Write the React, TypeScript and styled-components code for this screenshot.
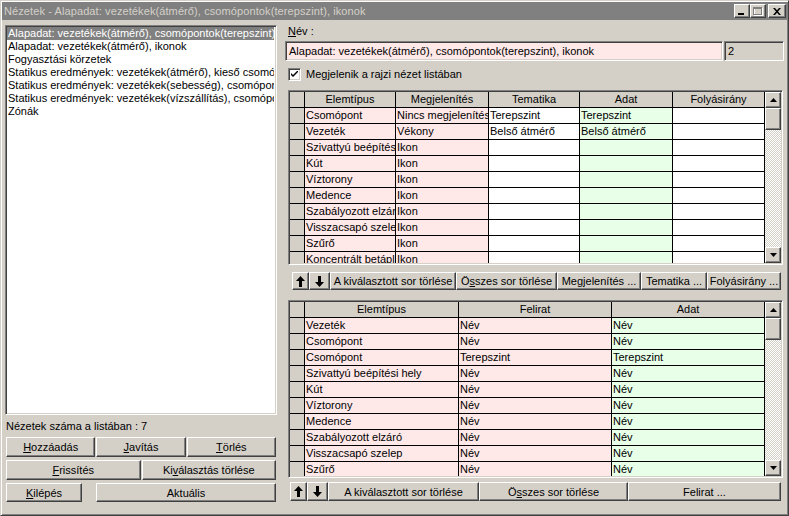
import React from 'react';
import styled, { createGlobalStyle, css } from 'styled-components';

const GlobalStyle = createGlobalStyle`
  html, body {
    margin: 0;
    padding: 0;
    background: #d4d0c8;
  }
  body {
    font-family: "Liberation Sans", Arial, sans-serif;
    font-size: 11px;
    color: #000;
  }
  * {
    box-sizing: border-box;
  }
`;

const raised = css`
  border: 1px solid;
  border-color: #ffffff #404040 #404040 #ffffff;
  box-shadow: inset -1px -1px 0 #808080, inset 1px 1px 0 #d4d0c8;
  background: #d4d0c8;
`;

const sunken = css`
  border: 1px solid;
  border-color: #808080 #ffffff #ffffff #808080;
  box-shadow: inset 1px 1px 0 #404040, inset -1px -1px 0 #d4d0c8;
`;

const listItems = [
  'Alapadat: vezetékek(átmérő), csomópontok(terepszint), ikonok',
  'Alapadat: vezetékek(átmérő), ikonok',
  'Fogyasztási körzetek',
  'Statikus eredmények: vezetékek(átmérő), kieső csomópontok',
  'Statikus eredmények: vezetékek(sebesség), csomópontok(nyomás)',
  'Statikus eredmények: vezetékek(vízszállítás), csomópontok(nyomás)',
  'Zónák',
];

const PINK = '#ffe8e8';
const GREEN = '#e8ffe8';
const WHITE = '#ffffff';

const topCols = [
  { title: 'Elemtípus', w: 91, bg: PINK },
  { title: 'Megjelenítés', w: 93, bg: PINK },
  { title: 'Tematika', w: 91, bg: WHITE },
  { title: 'Adat', w: 93, bg: GREEN },
  { title: 'Folyásirány', w: 92, bg: WHITE },
];

const topRows = [
  ['Csomópont', 'Nincs megjelenítés', 'Terepszint', 'Terepszint', ''],
  ['Vezeték', 'Vékony', 'Belső átmérő', 'Belső átmérő', ''],
  ['Szivattyú beépítési hely', 'Ikon', '', '', ''],
  ['Kút', 'Ikon', '', '', ''],
  ['Víztorony', 'Ikon', '', '', ''],
  ['Medence', 'Ikon', '', '', ''],
  ['Szabályozott elzáró', 'Ikon', '', '', ''],
  ['Visszacsapó szelep', 'Ikon', '', '', ''],
  ['Szűrő', 'Ikon', '', '', ''],
  ['Koncentrált betáplálás', 'Ikon', '', '', ''],
  ['Tározó', 'Ikon', '', '', ''],
];

const bottomCols = [
  { title: 'Elemtípus', w: 154, bg: PINK },
  { title: 'Felirat', w: 153, bg: PINK },
  { title: 'Adat', w: 153, bg: GREEN },
];

const bottomRows = [
  ['Vezeték', 'Név', 'Név'],
  ['Csomópont', 'Név', 'Név'],
  ['Csomópont', 'Terepszint', 'Terepszint'],
  ['Szivattyú beépítési hely', 'Név', 'Név'],
  ['Kút', 'Név', 'Név'],
  ['Víztorony', 'Név', 'Név'],
  ['Medence', 'Név', 'Név'],
  ['Szabályozott elzáró', 'Név', 'Név'],
  ['Visszacsapó szelep', 'Név', 'Név'],
  ['Szűrő', 'Név', 'Név'],
  ['Koncentrált betáplálás', 'Név', 'Név'],
];

type Col = { title: string; w: number; bg: string };

const ArrowUp = () => (
  <svg width="9" height="11" viewBox="0 0 9 11">
    <path d="M4.5 0 L9 5 L6 5 L6 11 L3 11 L3 5 L0 5 Z" fill="#000" />
  </svg>
);

const ArrowDown = () => (
  <svg width="9" height="11" viewBox="0 0 9 11">
    <path d="M4.5 11 L9 6 L6 6 L6 0 L3 0 L3 6 L0 6 Z" fill="#000" />
  </svg>
);

const Tri = ({ down }: { down?: boolean }) => (
  <svg width="7" height="4" viewBox="0 0 7 4">
    <path d={down ? 'M0 0 L7 0 L3.5 4 Z' : 'M3.5 0 L7 4 L0 4 Z'} fill="#000" />
  </svg>
);

const DataGrid = ({ cols, rows, height }: { cols: Col[]; rows: string[][]; height: number }) => (
  <GridFrame $h={height}>
    <GridBody $cols={'15px ' + cols.map((c) => c.w + 'px').join(' ')}>
      <Cell $bg="#d4d0c8" />
      {cols.map((c) => (
        <Cell key={c.title} $bg="#d4d0c8" $head>
          {c.title}
        </Cell>
      ))}
      {rows.map((r, i) => (
        <React.Fragment key={i}>
          <Cell $bg="#d4d0c8" />
          {r.map((v, j) => (
            <Cell key={j} $bg={cols[j].bg}>
              {v}
            </Cell>
          ))}
        </React.Fragment>
      ))}
    </GridBody>
    <ScrollBar>
      <ScrollBtn>
        <Tri />
      </ScrollBtn>
      <Thumb />
      <Track />
      <ScrollBtn>
        <Tri down />
      </ScrollBtn>
    </ScrollBar>
  </GridFrame>
);

const App = () => {
  return (
    <>
      <GlobalStyle />
      <Window>
        <TitleBar>
          <Title>Nézetek - Alapadat: vezetékek(átmérő), csomópontok(terepszint), ikonok</Title>
          <Caps>
            <CapBtn>
              <svg width="8" height="8" viewBox="0 0 8 8">
                <rect x="0" y="6" width="6" height="2" fill="#000" />
              </svg>
            </CapBtn>
            <CapBtn>
              <svg width="10" height="9" viewBox="0 0 10 9">
                <rect x="1.5" y="1.5" width="8" height="7" fill="none" stroke="#fff" />
                <rect x="0.5" y="0.5" width="8" height="7" fill="none" stroke="#808080" />
                <rect x="0" y="1" width="9" height="1" fill="#808080" />
              </svg>
            </CapBtn>
            <CloseBtn>
              <svg width="8" height="7" viewBox="0 0 8 7">
                <path d="M0 0 L2 0 L4 2.2 L6 0 L8 0 L5 3.5 L8 7 L6 7 L4 4.8 L2 7 L0 7 L3 3.5 Z" fill="#000" />
              </svg>
            </CloseBtn>
          </Caps>
        </TitleBar>

        <Body>
          <LeftCol>
            <ListBox>
              {listItems.map((t, i) => (
                <ListItem key={t} $selected={i === 0}>
                  {t}
                </ListItem>
              ))}
            </ListBox>
            <CountLabel>Nézetek száma a listában : 7</CountLabel>
            <BtnRow $cols="1fr 1fr 1fr" $h={20}>
              <Button><u>H</u>ozzáadás</Button>
              <Button><u>J</u>avítás</Button>
              <Button><u>T</u>örlés</Button>
            </BtnRow>
            <BtnRow $cols="1fr 1fr" $h={20} $mt={3}>
              <Button><u>F</u>rissítés</Button>
              <Button>Ki<u>v</u>álasztás törlése</Button>
            </BtnRow>
            <BtnRow $cols="76px 1fr" $gap={14} $h={19} $mt={3}>
              <Button><u>K</u>ilépés</Button>
              <Button>Aktuális</Button>
            </BtnRow>
          </LeftCol>

          <RightCol>
            <NameLabel>
              <u>N</u>év :
            </NameLabel>
            <InputRow>
              <NameInput>Alapadat: vezetékek(átmérő), csomópontok(terepszint), ikonok</NameInput>
              <NumBox>2</NumBox>
            </InputRow>
            <CheckRow>
              <CheckBox>
                <svg width="7" height="7" viewBox="0 0 7 7">
                  <path d="M0 2 L0 4 L2 6 L7 1 L7 -1 L2 4 Z" fill="#000" />
                </svg>
              </CheckBox>
              <span>Megjelenik a rajzi nézet listában</span>
            </CheckRow>

            <GridWrap $mt={9}>
              <DataGrid cols={topCols} rows={topRows} height={175} />
            </GridWrap>

            <Toolbar $mt={7} $ml={7}>
              <Button $w={17}><ArrowUp /></Button>
              <Button $w={21}><ArrowDown /></Button>
              <Button $w={126}>A kiválasztott sor törlése</Button>
              <Button $w={101}>Ö<u>s</u>szes sor törlése</Button>
              <Button $w={84}>Megjelenítés ...</Button>
              <Button $w={66}>Tematika ...</Button>
              <Button $w={74}>Folyásirány ...</Button>
            </Toolbar>

            <GridWrap $mt={10}>
              <DataGrid cols={bottomCols} rows={bottomRows} height={178} />
            </GridWrap>

            <Toolbar $mt={4} $ml={5} $h={19}>
              <Button $w={17}><ArrowUp /></Button>
              <Button $w={21}><ArrowDown /></Button>
              <Button $w={151}>A kiválasztott sor törlése</Button>
              <Button $w={149}>Ö<u>s</u>szes sor törlése</Button>
              <Button $w={153}>Felirat ...</Button>
            </Toolbar>
          </RightCol>
        </Body>
      </Window>
    </>
  );
};

export default App;

const Window = styled.div`
  width: 789px;
  height: 516px;
  background: #d4d0c8;
  border: 1px solid;
  border-color: #d4d0c8 #404040 #404040 #d4d0c8;
  box-shadow: inset 1px 1px 0 #ffffff, inset -1px -1px 0 #808080;
  padding: 1px;
  display: flex;
  flex-direction: column;
  overflow: hidden;
`;

const TitleBar = styled.div`
  height: 18px;
  background: #808080;
  display: flex;
  align-items: center;
  justify-content: space-between;
  padding: 0 1px 0 2px;
  flex-shrink: 0;
`;

const Title = styled.div`
  color: #d4d0c8;
  font-size: 11px;
  white-space: nowrap;
  letter-spacing: 0.1px;
`;

const Caps = styled.div`
  display: flex;
  align-items: center;
`;

const CapBtn = styled.div`
  ${raised};
  width: 16px;
  height: 14px;
  display: flex;
  align-items: center;
  justify-content: center;
`;

const CloseBtn = styled(CapBtn)`
  margin-left: 2px;
  width: 18px;
`;

const Body = styled.div`
  flex: 1;
  display: flex;
  gap: 8px;
  padding: 5px 0 0 3px;
`;

const LeftCol = styled.div`
  width: 272px;
  display: flex;
  flex-direction: column;
`;

const ListBox = styled.div`
  ${sunken};
  border-width: 1px;
  height: 390px;
  background: #ffffff;
  padding: 1px 2px 1px 1px;
  overflow: hidden;
`;

const ListItem = styled.div<{ $selected?: boolean }>`
  height: 13px;
  line-height: 13px;
  padding-left: 1px;
  white-space: nowrap;
  overflow: hidden;
  background: ${(p) => (p.$selected ? '#808080' : 'transparent')};
  color: ${(p) => (p.$selected ? '#ffffff' : '#000000')};
`;

const CountLabel = styled.div`
  height: 22px;
  line-height: 22px;
  padding-left: 1px;
`;

const BtnRow = styled.div<{ $cols: string; $gap?: number; $h: number; $mt?: number }>`
  display: grid;
  grid-template-columns: ${(p) => p.$cols};
  gap: ${(p) => p.$gap ?? 1}px;
  height: ${(p) => p.$h}px;
  margin-top: ${(p) => p.$mt ?? 0}px;
  padding: 0 1px;
`;

const Button = styled.div<{ $w?: number }>`
  ${raised};
  width: ${(p) => (p.$w ? p.$w + 'px' : 'auto')};
  flex-shrink: 0;
  display: flex;
  align-items: center;
  justify-content: center;
  white-space: nowrap;
  overflow: hidden;
  font-size: 11px;
  cursor: default;
`;

const RightCol = styled.div`
  width: 500px;
  display: flex;
  flex-direction: column;
`;

const NameLabel = styled.div`
  height: 16px;
  line-height: 12px;
  padding-left: 3px;
`;

const InputRow = styled.div`
  display: flex;
  gap: 1px;
  height: 20px;
`;

const NameInput = styled.div`
  ${sunken};
  width: 438px;
  background: ${PINK};
  padding: 0 3px;
  line-height: 18px;
  white-space: nowrap;
  overflow: hidden;
`;

const NumBox = styled.div`
  ${sunken};
  width: 60px;
  background: #d4d0c8;
  padding: 0 3px;
  line-height: 18px;
`;

const CheckRow = styled.div`
  display: flex;
  align-items: center;
  gap: 5px;
  height: 14px;
  margin-top: 6px;
  padding-left: 3px;
`;

const CheckBox = styled.div`
  ${sunken};
  width: 13px;
  height: 13px;
  background: #ffffff;
  display: flex;
  align-items: center;
  justify-content: center;
`;

const GridWrap = styled.div<{ $mt: number }>`
  margin-top: ${(p) => p.$mt}px;
  margin-left: 3px;
`;

const GridFrame = styled.div<{ $h: number }>`
  ${sunken};
  width: 495px;
  height: ${(p) => p.$h}px;
  padding: 1px;
  display: flex;
  background: #d4d0c8;
`;

const GridBody = styled.div<{ $cols: string }>`
  display: grid;
  grid-template-columns: ${(p) => p.$cols};
  grid-auto-rows: 16px;
  align-content: start;
  overflow: hidden;
  width: 475px;
`;

const Cell = styled.div<{ $bg: string; $head?: boolean }>`
  background: ${(p) => p.$bg};
  border-right: 1px solid #000;
  border-bottom: 1px solid #000;
  padding: 0 1px;
  line-height: 15px;
  white-space: nowrap;
  overflow: hidden;
  text-align: ${(p) => (p.$head ? 'center' : 'left')};
`;

const ScrollBar = styled.div`
  width: 16px;
  display: flex;
  flex-direction: column;
`;

const ScrollBtn = styled.div`
  ${raised};
  height: 16px;
  flex-shrink: 0;
  display: flex;
  align-items: center;
  justify-content: center;
`;

const Thumb = styled.div`
  ${raised};
  height: 22px;
  flex-shrink: 0;
`;

const Track = styled.div`
  flex: 1;
  background-image: repeating-conic-gradient(#ffffff 0% 25%, #d4d0c8 0% 50%);
  background-size: 2px 2px;
`;

const Toolbar = styled.div<{ $mt: number; $ml: number; $h?: number }>`
  display: flex;
  gap: 0;
  height: ${(p) => p.$h ?? 18}px;
  margin-top: ${(p) => p.$mt}px;
  margin-left: ${(p) => p.$ml}px;
`;
